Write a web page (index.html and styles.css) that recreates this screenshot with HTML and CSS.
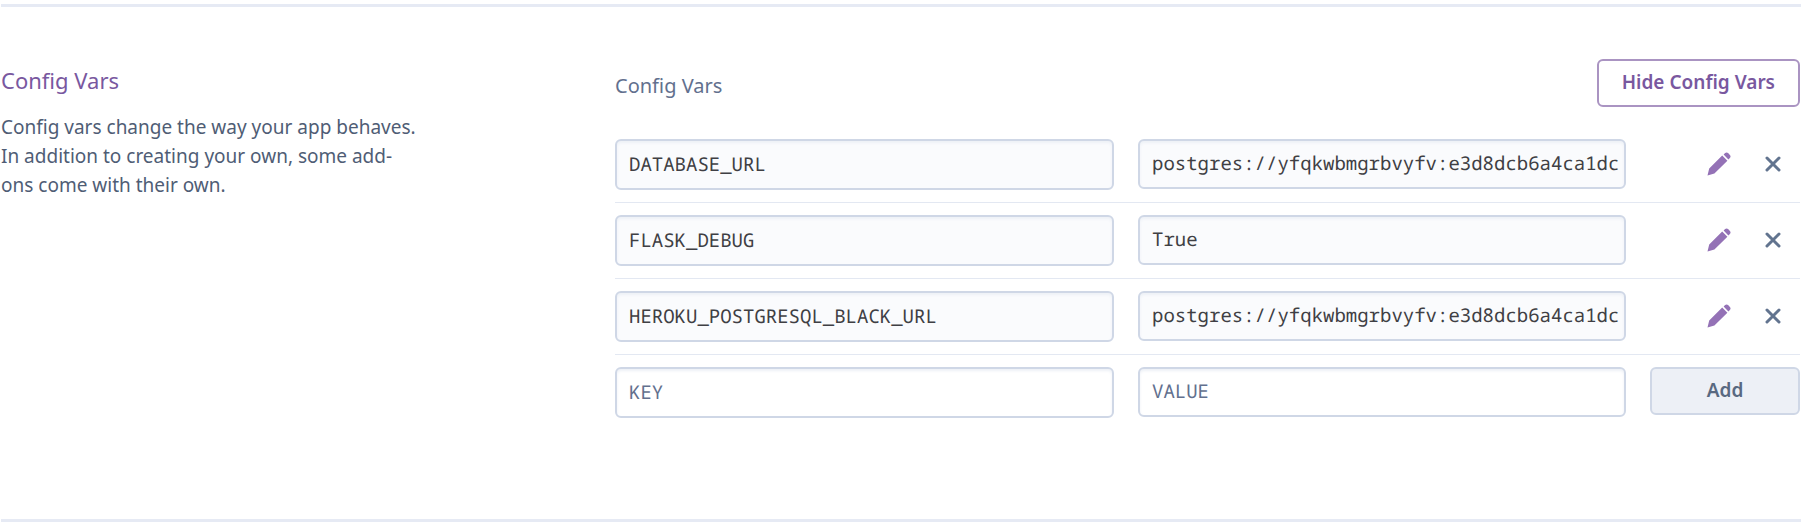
FILE: index.html
```
<!DOCTYPE html>
<html lang="en">
<head>
<meta charset="utf-8">
<title>Config Vars</title>
<link rel="stylesheet" href="styles.css">
</head>
<body>
<svg class="sprite" aria-hidden="true">
  <symbol id="pencil" viewBox="0 0 24 24">
    <path d="M0.5 23.5 L2.2 16.6 L15.2 3.6 L20.4 8.8 L7.4 21.6 Z M16.6 2.6 L18.1 1.1 Q19.6 -0.2 21.1 1.1 L22.9 2.9 Q24.2 4.4 22.9 5.9 L21.4 7.4 Z"/>
  </symbol>
  <symbol id="cross" viewBox="0 0 16 16">
    <path d="M2 2 L14 14 M14 2 L2 14"/>
  </symbol>
</svg>
<main class="page">
  <section class="settings">
    <div class="intro">
      <h2 class="intro-title">Config Vars</h2>
      <p class="intro-text">Config vars change the way your app behaves. In addition to creating your own, some add-ons come with their own.</p>
    </div>
    <div class="panel">
      <header class="panel-head">
        <h3 class="panel-title">Config Vars</h3>
        <button class="btn btn-outline" type="button">Hide Config Vars</button>
      </header>
      <div class="row">
        <input class="field field-key" type="text" aria-label="Key" value="DATABASE_URL" readonly>
        <input class="field" type="text" aria-label="Value" value="postgres://yfqkwbmgrbvyfv:e3d8dcb6a4ca1dc" readonly>
        <div class="actions">
          <button class="icon-btn" type="button" aria-label="Edit"><svg class="pencil"><use href="#pencil"/></svg></button>
          <button class="icon-btn" type="button" aria-label="Remove"><svg class="cross"><use href="#cross"/></svg></button>
        </div>
      </div>
      <div class="row">
        <input class="field field-key" type="text" aria-label="Key" value="FLASK_DEBUG" readonly>
        <input class="field" type="text" aria-label="Value" value="True" readonly>
        <div class="actions">
          <button class="icon-btn" type="button" aria-label="Edit"><svg class="pencil"><use href="#pencil"/></svg></button>
          <button class="icon-btn" type="button" aria-label="Remove"><svg class="cross"><use href="#cross"/></svg></button>
        </div>
      </div>
      <div class="row">
        <input class="field field-key" type="text" aria-label="Key" value="HEROKU_POSTGRESQL_BLACK_URL" readonly>
        <input class="field" type="text" aria-label="Value" value="postgres://yfqkwbmgrbvyfv:e3d8dcb6a4ca1dc" readonly>
        <div class="actions">
          <button class="icon-btn" type="button" aria-label="Edit"><svg class="pencil"><use href="#pencil"/></svg></button>
          <button class="icon-btn" type="button" aria-label="Remove"><svg class="cross"><use href="#cross"/></svg></button>
        </div>
      </div>
      <form class="row">
        <input class="field field-key" type="text" aria-label="Key" placeholder="KEY">
        <input class="field" type="text" aria-label="Value" placeholder="VALUE">
        <button class="btn btn-add" type="button">Add</button>
      </form>
    </div>
  </section>
</main>
</body>
</html>
```
FILE: styles.css
```
* {
  box-sizing: border-box;
}

body {
  margin: 0;
  background: #fff;
  color: #4f5d75;
  font-family: "Noto Sans", "Open Sans", sans-serif;
  font-size: 19px;
  line-height: 29px;
}

.sprite {
  position: absolute;
  width: 0;
  height: 0;
}

.page {
  padding: 4px 6px 5px 1px;
}

.settings {
  display: grid;
  grid-template-columns: 614fr 1186fr;
  padding: 52px 0 89px;
  border-top: 3px solid #e6eaf4;
  border-bottom: 3px solid #e6eaf4;
}

.intro {
  max-width: 420px;
  padding-top: 6px;
}

.intro-title,
.panel-title,
.intro-text {
  margin: 0;
  font-weight: 400;
}

.intro-title {
  margin-bottom: 18px;
  color: #79589f;
  font-size: 22px;
  line-height: 30px;
}

.panel {
  padding-right: 1px;
}

.panel-head {
  display: flex;
  align-items: center;
  justify-content: space-between;
  margin-bottom: 20px;
}

.panel-title {
  padding-top: 4px;
  color: #62708e;
  font-size: 20px;
}

.btn {
  height: 48px;
  padding: 0 23px 2px;
  border: 2px solid;
  border-radius: 6px;
  font: inherit;
  font-weight: 600;
}

.btn-outline {
  border-color: #aa94c2;
  background: #fff;
  color: #79589f;
}

.btn-add {
  border-color: #cfd7e6;
  background: #edf0f6;
  color: #596981;
}

.row {
  display: grid;
  grid-template-columns: 499fr 488fr 150px;
  column-gap: 24px;
  align-items: start;
  padding: 12px 0;
  border-bottom: 1px solid #e3e8f2;
}

.row:last-child {
  border-bottom: 0;
}

.field {
  width: 100%;
  min-width: 0;
  height: 50px;
  padding: 0 0 2px 12px;
  border: 2px solid #cfd7e6;
  border-radius: 6px;
  outline: 0;
  background: #fff;
  box-shadow: inset 0 2px 3px #edf0f6;
  color: #3f3f44;
  font-family: "Noto Sans Mono", "DejaVu Sans Mono", monospace;
  font-size: 19px;
  line-height: 29px;
  text-rendering: geometricPrecision;
}

.field-key {
  height: 51px;
}

.field:read-only {
  background: #fafbfd;
}

.field::placeholder {
  color: #62708e;
  opacity: 1;
}

.actions {
  display: flex;
  align-items: center;
  justify-content: flex-end;
  gap: 26px;
  height: 50px;
  padding-right: 13px;
}

.icon-btn {
  display: grid;
  place-items: center;
  width: 28px;
  height: 32px;
  padding: 0;
  border: 0;
  background: none;
}

.pencil {
  width: 24px;
  height: 24px;
  fill: #9472b6;
}

.cross {
  width: 16px;
  height: 16px;
  fill: none;
  stroke: #62748f;
  stroke-width: 3;
  stroke-linecap: round;
}
```
